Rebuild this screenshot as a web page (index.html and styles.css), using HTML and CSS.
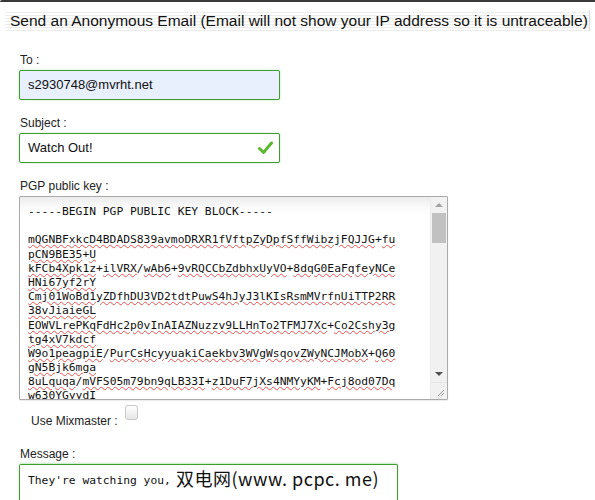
FILE: index.html
```html
<!DOCTYPE html>
<html>
<head>
<meta charset="utf-8">
<link rel="stylesheet" href="styles.css">
</head>
<body>
<div class="topbar"></div>
<div class="title">Send an Anonymous Email (Email will not show your IP address so it is untraceable)</div>
<form class="form">
  <div class="field">
    <label class="label">To :</label>
    <div class="input input-to">s2930748@mvrht.net</div>
  </div>
  <div class="field">
    <label class="label">Subject :</label>
    <div class="input input-subject">
      <span>Watch Out!</span>
      <svg class="check" width="15" height="14" viewBox="0 0 15 14"><path d="M1.5 7.5 L5.5 11.5 L13.5 2" fill="none" stroke="#5cb82e" stroke-width="3" stroke-linecap="round" stroke-linejoin="round"/></svg>
    </div>
  </div>
  <div class="field">
    <label class="label">PGP public key :</label>
    <div class="keybox">
      <div class="keytext">
        <div class="ln">-----BEGIN PGP PUBLIC KEY BLOCK-----</div>
        <div class="ln">&nbsp;</div>
        <div class="ln"><u>mQGNBFxkcD4BDADS839avmoDRXR1fVftpZyDpfSffWibzjFQJJG</u>+<u>fu</u></div>
        <div class="ln"><u>pCN9BE35</u>+<u>U</u></div>
        <div class="ln"><u>kFCb4Xpk1z</u>+<u>ilVRX</u>/<u>wAb6</u>+<u>9vRQCCbZdbhxUyVO</u>+<u>8dqG0EaFqfeyNCe</u></div>
        <div class="ln"><u>HNi67yf2rY</u></div>
        <div class="ln"><u>Cmj01WoBd1yZDfhDU3VD2tdtPuwS4hJyJ3lKIsRsmMVrfnUiTTP2RR</u></div>
        <div class="ln"><u>38vJiaieGL</u></div>
        <div class="ln"><u>EOWVLrePKqFdHc2p0vInAIAZNuzzv9LLHnTo2TFMJ7Xc</u>+<u>Co2Cshy3g</u></div>
        <div class="ln"><u>tg4xV7kdcf</u></div>
        <div class="ln"><u>W9o1peagpiE</u>/<u>PurCsHcyyuakiCaekbv3WVgWsqovZWyNCJMobX</u>+<u>Q60</u></div>
        <div class="ln"><u>gN5Bjk6mga</u></div>
        <div class="ln"><u>8uLquqa</u>/<u>mVFS05m79bn9qLB33I</u>+<u>z1DuF7jXs4NMYyKM</u>+<u>Fcj8od07Dq</u></div>
        <div class="ln"><u>w630YGyydI</u></div>
      </div>
      <div class="scrollbar">
        <div class="arrow up"></div>
        <div class="track"><div class="thumb"></div></div>
        <div class="arrow down"></div>
        <div class="resize">
          <svg width="16" height="16" viewBox="0 0 16 16"><path d="M13 7 L7 13 M13 10 L10 13" stroke="#999" stroke-width="1"/></svg>
        </div>
      </div>
    </div>
  </div>
  <div class="mix">
    <span class="mix-label">Use Mixmaster :</span>
    <span class="checkbox"></span>
  </div>
  <div class="field last">
    <label class="label">Message :</label>
    <div class="msgbox">
      <div class="msgtext">They're watching you,</div>
      <div class="watermark">双电网(www. pcpc. me)</div>
    </div>
  </div>
</form>
</body>
</html>
```
FILE: styles.css
```css
html, body {
  margin: 0;
  padding: 0;
  background: #fff;
  font-family: "Liberation Sans", Arial, sans-serif;
  color: #222;
  overflow: hidden;
  height: 500px;
}
.topbar {
  height: 2px;
  background: #3a3a3a;
  border-top-left-radius: 3px;
}
.title {
  margin: 8px 5px 0 5px;
  height: 21px;
  padding-left: 5px;
  font-size: 15.5px;
  line-height: 21px;
  color: #111;
  white-space: nowrap;
  overflow: hidden;
  background: repeating-linear-gradient(to bottom, #fff 0, #fff 2px, #ececec 2px, #ececec 3px);
  border-right: 1px solid #ddd;
}
.form {
  padding: 22px 0 0 19px;
}
.field {
  margin-bottom: 16px;
}
.field.last {
  margin-bottom: 0;
}
.label {
  display: block;
  font-size: 12px;
  line-height: 15px;
  color: #222;
  margin-bottom: 2px;
  padding-left: 1px;
}
.input {
  box-sizing: border-box;
  width: 261px;
  height: 30px;
  border: 1px solid #3f9d2f;
  border-radius: 2px;
  box-shadow: 0 0 2px rgba(90, 190, 80, 0.45);
  padding: 0 8px;
  font-size: 13px;
  line-height: 28px;
  color: #111;
  display: flex;
  align-items: center;
  justify-content: space-between;
}
.input-to {
  background: #e8f0fe;
}
.input-subject {
  background: #fff;
  padding-right: 6px;
}
.check {
  display: block;
}
.keybox {
  box-sizing: border-box;
  width: 429px;
  height: 204px;
  border: 1px solid #aaa;
  border-radius: 1px;
  display: flex;
  overflow: hidden;
  background: linear-gradient(to bottom, #ececec 0, #fafafa 10px, #fff 18px);
  box-shadow: 0 1px 1px rgba(0,0,0,0.08);
}
.keytext {
  flex: 1;
  padding: 8px 0 0 8px;
  font-family: "DejaVu Sans Mono", "Liberation Mono", monospace;
  font-size: 11.3px;
  line-height: 14.2px;
  color: #111;
  overflow: hidden;
}
.ln {
  white-space: nowrap;
  height: 14.2px;
}
.keytext u {
  text-decoration: underline wavy #e25252;
  text-decoration-thickness: 1px;
  text-underline-offset: 1px;
}
.scrollbar {
  width: 16px;
  display: flex;
  flex-direction: column;
  background: #f1f1f1;
  border-left: 1px solid #ececec;
}
.arrow {
  height: 16px;
  position: relative;
}
.arrow::after {
  content: "";
  position: absolute;
  left: 4px;
  border-left: 4px solid transparent;
  border-right: 4px solid transparent;
}
.arrow.up::after {
  top: 6px;
  border-bottom: 4px solid #a3a3a3;
}
.arrow.down::after {
  top: 6px;
  border-top: 4px solid #505050;
}
.track {
  flex: 1;
  padding: 0 1px;
}
.thumb {
  height: 30px;
  background: #c1c1c1;
}
.resize {
  height: 16px;
  background: #f1f1f1;
  border-top: 1px solid #e6e6e6;
}
.resize svg {
  display: block;
}
.mix {
  display: flex;
  align-items: flex-start;
  padding-left: 12px;
  height: 48px;
  margin-top: -17px;
}
.mix-label {
  font-size: 12px;
  line-height: 15px;
  margin-top: 15px;
  color: #222;
}
.checkbox {
  box-sizing: border-box;
  width: 13px;
  height: 15px;
  margin: 6px 0 0 7px;
  border: 1px solid #c8c8c8;
  border-radius: 3px;
  background: linear-gradient(to bottom, #fff, #e6e6e6);
}
.msgbox {
  position: relative;
  box-sizing: border-box;
  width: 379px;
  height: 37px;
  border: 1px solid #3f9d2f;
  border-bottom: none;
  border-radius: 2px 2px 0 0;
  box-shadow: 0 -1px 2px rgba(90, 190, 80, 0.35);
}
.msgtext {
  padding: 9px 0 0 8px;
  font-family: "DejaVu Sans Mono", "Liberation Mono", monospace;
  font-size: 11.3px;
  line-height: 14px;
  color: #111;
}
.watermark {
  position: absolute;
  left: 156px;
  top: 1px;
  font-family: "Noto Sans CJK SC", "DejaVu Sans", sans-serif;
  font-size: 18px;
  line-height: 24px;
  color: #111;
  white-space: nowrap;
  letter-spacing: 0.5px;
}
```
